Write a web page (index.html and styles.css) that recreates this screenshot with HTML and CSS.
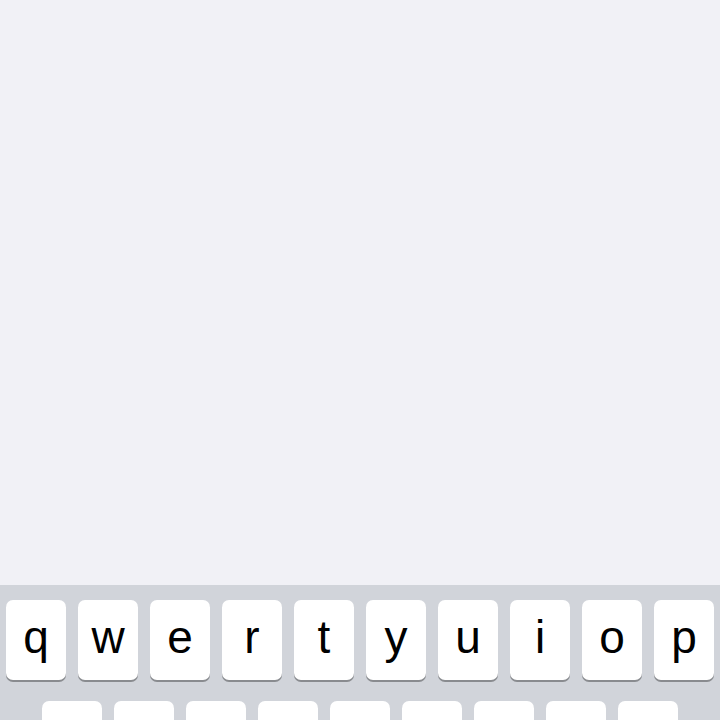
FILE: index.html
```html
<!DOCTYPE html>
<html lang="en">
<head>
    <meta charset="UTF-8">
    <meta name="viewport" content="width=device-width, initial-scale=1.0">
    <title>Keyboard</title>
    <link rel="stylesheet" href="styles.css">
</head>
<body>
    <div class="screen">
        <div class="content"></div>

        <div class="keyboard">
            <div class="row">
                <div class="key">q</div>
                <div class="key">w</div>
                <div class="key">e</div>
                <div class="key">r</div>
                <div class="key">t</div>
                <div class="key">y</div>
                <div class="key">u</div>
                <div class="key">i</div>
                <div class="key">o</div>
                <div class="key">p</div>
            </div>
            <div class="row">
                <div class="key">a</div>
                <div class="key">s</div>
                <div class="key">d</div>
                <div class="key">f</div>
                <div class="key">g</div>
                <div class="key">h</div>
                <div class="key">j</div>
                <div class="key">k</div>
                <div class="key">l</div>
            </div>
        </div>
    </div>
</body>
</html>
```

FILE: styles.css
```css
body {
    margin: 0;
    padding: 0;
    font-family: "Liberation Sans", Arial, sans-serif;
    background-color: #f1f1f6;
}
.screen {
    height: 720px;
    display: flex;
    flex-direction: column;
    overflow: hidden;
}
.content {
    flex: 0 0 585px;
    background-color: #f1f1f6;
}
.keyboard {
    flex: 1 0 auto;
    background-color: #d1d4da;
    padding: 15px 6px;
    display: flex;
    flex-direction: column;
    gap: 21px;
}
.row {
    display: flex;
    justify-content: center;
    gap: 12px;
}
.key {
    width: 60px;
    height: 80px;
    flex: 0 0 60px;
    background-color: #fff;
    border-radius: 7px;
    box-shadow: 0 2px 0 #898b8f;
    color: #000;
    font-size: 46px;
    display: flex;
    justify-content: center;
    align-items: center;
    padding-bottom: 6px;
    box-sizing: border-box;
}
```
